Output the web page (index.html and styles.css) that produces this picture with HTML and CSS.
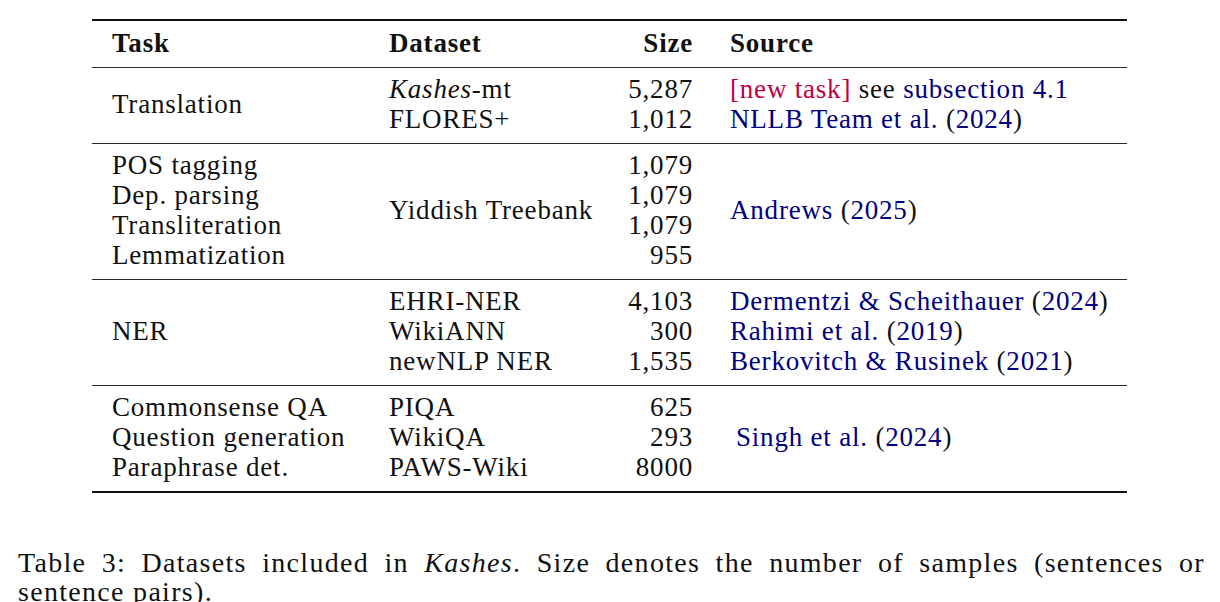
FILE: index.html
```html
<!DOCTYPE html>
<html lang="en">
<head>
<meta charset="utf-8">
<title>Table 3: Datasets included in Kashes</title>
<link rel="stylesheet" href="styles.css">
</head>
<body>
<div class="page">
  <div class="table">
    <div class="group head">
      <div class="cell">Task</div>
      <div class="cell">Dataset</div>
      <div class="cell num">Size</div>
      <div class="cell src">Source</div>
    </div>

    <div class="group">
      <div class="cell span2 mid">Translation</div>
      <div class="cell"><i>Kashes</i>-mt</div>
      <div class="cell num">5,287</div>
      <div class="cell src"><span class="purple">[new task]</span> see <span class="link">subsection 4.1</span></div>
      <div class="cell">FLORES+</div>
      <div class="cell num">1,012</div>
      <div class="cell src"><span class="link">NLLB Team et al.</span> (<span class="link">2024</span>)</div>
    </div>

    <div class="group">
      <div class="cell c1 r1">POS tagging</div>
      <div class="cell c2 span4 mid">Yiddish Treebank</div>
      <div class="cell c3 r1 num">1,079</div>
      <div class="cell c4 span4 mid src"><span><span class="link">Andrews</span> (<span class="link">2025</span>)</span></div>
      <div class="cell c1 r2">Dep. parsing</div>
      <div class="cell c3 r2 num">1,079</div>
      <div class="cell c1 r3">Transliteration</div>
      <div class="cell c3 r3 num">1,079</div>
      <div class="cell c1 r4">Lemmatization</div>
      <div class="cell c3 r4 num">955</div>
    </div>

    <div class="group">
      <div class="cell span3 mid">NER</div>
      <div class="cell">EHRI-NER</div>
      <div class="cell num">4,103</div>
      <div class="cell src"><span class="link">Dermentzi &amp; Scheithauer</span> (<span class="link">2024</span>)</div>
      <div class="cell">WikiANN</div>
      <div class="cell num">300</div>
      <div class="cell src"><span class="link">Rahimi et al.</span> (<span class="link">2019</span>)</div>
      <div class="cell">newNLP NER</div>
      <div class="cell num">1,535</div>
      <div class="cell src"><span class="link">Berkovitch &amp; Rusinek</span> (<span class="link">2021</span>)</div>
    </div>

    <div class="group last">
      <div class="cell c1 r1">Commonsense QA</div>
      <div class="cell c2 r1">PIQA</div>
      <div class="cell c3 r1 num">625</div>
      <div class="cell c4 span3 mid src indent"><span><span class="link">Singh et al.</span> (<span class="link">2024</span>)</span></div>
      <div class="cell c1 r2">Question generation</div>
      <div class="cell c2 r2">WikiQA</div>
      <div class="cell c3 r2 num">293</div>
      <div class="cell c1 r3">Paraphrase det.</div>
      <div class="cell c2 r3">PAWS-Wiki</div>
      <div class="cell c3 r3 num">8000</div>
    </div>
  </div>

  <p class="caption">
    <span class="line1">Table 3: Datasets included in <i>Kashes</i>. Size denotes the number of samples (sentences or</span>
    <span class="line2">sentence pairs).</span>
  </p>
</div>
</body>
</html>
```

FILE: styles.css
```css
html, body {
  margin: 0;
  padding: 0;
  background: #ffffff;
}

body {
  font-family: "Liberation Serif", "Times New Roman", serif;
  font-size: 27px;
  letter-spacing: 0.8px;
  color: #111111;
}

.page {
  width: 1220px;
  padding-top: 19px;
}

.table {
  margin-left: 92px;
  width: 1035px;
  border-top: 2px solid #111111;
  border-bottom: 2px solid #111111;
}

.group {
  display: grid;
  grid-template-columns: 277px 196px 108px 1fr;
  grid-auto-rows: 30px;
  padding: 6px 0 9px 20px;
  border-bottom: 1px solid #2a2a2a;
}

.group.head {
  padding-top: 7px;
  font-weight: bold;
}

.group.last {
  border-bottom: none;
}

.cell {
  line-height: 30px;
  white-space: nowrap;
}

.num {
  text-align: right;
}

.src {
  padding-left: 37px;
}

.indent {
  padding-left: 43px;
}

.mid {
  display: flex;
  align-items: center;
}

.span2 { grid-row: span 2; }
.span3 { grid-row: span 3; }
.span4 { grid-row: span 4; }

.c1 { grid-column: 1; }
.c2 { grid-column: 2; }
.c3 { grid-column: 3; }
.c4 { grid-column: 4; }
.r1 { grid-row: 1; }
.r2 { grid-row: 2; }
.r3 { grid-row: 3; }
.r4 { grid-row: 4; }

.c2.span4 { grid-row: 1 / span 4; }
.c4.span4 { grid-row: 1 / span 4; }
.c4.span3 { grid-row: 1 / span 3; }

.link {
  color: #000080;
}

.purple {
  color: #bf0040;
}

.caption {
  margin: 55px 0 0 18px;
  width: 1187px;
  font-size: 28px;
  letter-spacing: 1.3px;
  line-height: 29px;
}

.caption .line1 {
  display: block;
  text-align: justify;
  text-align-last: justify;
}

.caption .line2 {
  display: block;
}
```
